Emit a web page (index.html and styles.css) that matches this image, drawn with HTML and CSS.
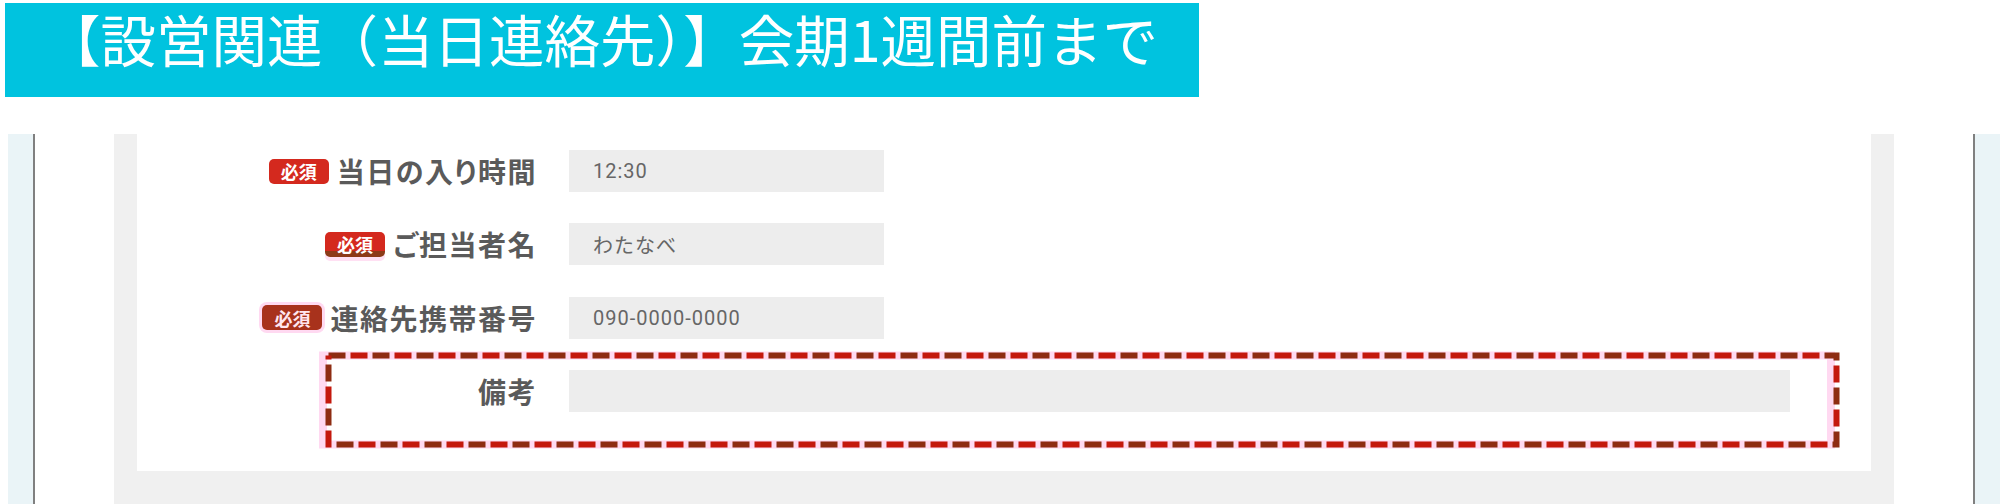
FILE: index.html
```html
<!DOCTYPE html>
<html lang="ja">
<head>
<meta charset="utf-8">
<title>設営関連（当日連絡先）</title>
<link rel="stylesheet" href="styles.css">
</head>
<body>
  <h1 class="banner">【設営関連（当日連絡先）】会期1週間前まで</h1>

  <div class="main">
    <div class="side side-left"></div>

    <div class="panel">
      <form class="card">
        <div class="row">
          <div class="label"><span class="badge">必須</span><span class="label-text">当日の入り時間</span></div>
          <div class="field">12:30</div>
        </div>
        <div class="row">
          <div class="label"><span class="badge badge-shade">必須</span><span class="label-text">ご担当者名</span></div>
          <div class="field">わたなべ</div>
        </div>
        <div class="row">
          <div class="label"><span class="badge badge-marked">必須</span><span class="label-text">連絡先携帯番号</span></div>
          <div class="field">090-0000-0000</div>
        </div>
        <div class="row row-noted">
          <div class="label"><span class="label-text">備考</span></div>
          <div class="field field-wide"></div>
          <svg class="note-frame" width="1523" height="99" viewBox="0 0 1523 99" aria-hidden="true">
            <rect x="5" y="5.5" width="1508" height="89" fill="none" stroke="#ffd9f1" stroke-width="8"/>
            <rect x="10.5" y="5.5" width="1508" height="89" fill="none" stroke="#8e2c12" stroke-width="6" stroke-dasharray="17 27"/>
            <rect x="10.5" y="5.5" width="1508" height="89" fill="none" stroke="#c4180d" stroke-width="6" stroke-dasharray="17 27" stroke-dashoffset="-22"/>
          </svg>
        </div>
      </form>
    </div>

    <div class="side side-right"></div>
  </div>
</body>
</html>
```

FILE: styles.css
```css
html, body {
  margin: 0;
  padding: 0;
  background: #ffffff;
}

body {
  width: 2000px;
  height: 504px;
  overflow: hidden;
  font-family: "Noto Sans CJK JP", "Noto Sans", sans-serif;
}

/* heading bar */
.banner {
  box-sizing: border-box;
  margin: 3px 0 0 5px;
  width: 1194px;
  height: 94px;
  padding: 8px 0 0 40px;
  background: #00c3df;
  color: #ffffff;
  font-size: 55.5px;
  line-height: 55px;
  font-weight: 400;
  white-space: nowrap;
}

/* page body below the heading */
.main {
  display: flex;
  margin-top: 37px;
  height: 370px;
}

.side {
  flex: none;
  width: 25px;
  background: #eaf4f7;
}

.side-left {
  margin-left: 8px;
  border-right: 2px solid #808080;
}

.side-right {
  margin-left: 79px;
  border-left: 2px solid #808080;
}

.panel {
  flex: none;
  box-sizing: border-box;
  margin-left: 79px;
  width: 1780px;
  padding: 0 23px;
  background: #f0f0f0;
}

.card {
  display: flex;
  flex-direction: column;
  gap: 31.3px;
  margin: 0;
  padding: 16px 0 59px;
  background: #ffffff;
}

/* form rows */
.row {
  position: relative;
  display: flex;
  align-items: center;
  height: 42px;
}

.label {
  flex: none;
  width: 400px;
  display: flex;
  justify-content: flex-end;
  align-items: center;
  gap: 8px;
}

.label-text {
  color: #5a5a5a;
  font-size: 28px;
  font-weight: 700;
  letter-spacing: 1.5px;
  font-feature-settings: "palt";
  line-height: 1;
}

.badge {
  box-sizing: border-box;
  display: inline-flex;
  align-items: center;
  justify-content: center;
  width: 60px;
  height: 25px;
  border-radius: 5px;
  background: #d4291e;
  color: #ffffff;
  font-size: 18px;
  font-weight: 700;
  line-height: 1;
}

.badge-shade {
  background: linear-gradient(#d4291e 0, #d4291e 78%, #8c3a18 78%, #8c3a18 100%);
  box-shadow: 0 4px 0 #ffe0f3;
}

.badge-marked {
  background: #a8321c;
  color: #ffe6ef;
  box-shadow: 0 0 0 3px #ffd9f1;
}

.field {
  flex: none;
  box-sizing: border-box;
  display: flex;
  align-items: center;
  margin-left: 32px;
  width: 315px;
  height: 42px;
  padding-left: 24px;
  background: #ededed;
  color: #666666;
  font-family: Roboto, "Noto Sans CJK JP", sans-serif;
  font-size: 20px;
  letter-spacing: 1px;
}

.field-wide {
  width: 1221px;
}

/* dashed highlight drawn over the remarks row */
.note-frame {
  position: absolute;
  left: 181px;
  top: -20px;
  pointer-events: none;
}
```
